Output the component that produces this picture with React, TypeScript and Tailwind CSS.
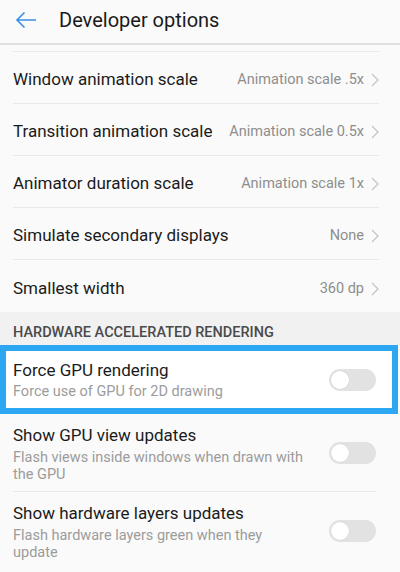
import React from "react";

const font = { fontFamily: "Roboto, 'Noto Sans', sans-serif" };

function Chevron() {
  return (
    <svg width="8" height="14" viewBox="0 0 8 14" className="ml-[7px] shrink-0">
      <path d="M1 1l6 6-6 6" fill="none" stroke="#c4c4c4" strokeWidth="1.3" />
    </svg>
  );
}

function Toggle() {
  return (
    <div className="w-[47px] h-[22px] rounded-full bg-[#e2e2e2] flex items-center px-[2px] shrink-0">
      <div className="w-[18px] h-[18px] rounded-full bg-white shadow-[0_0_1px_rgba(0,0,0,0.15)]" />
    </div>
  );
}

function ValueRow({ title, value, divider = true }: { title: string; value: string; divider?: boolean }) {
  return (
    <div className="pl-[13px] pr-[21px]">
      <div className={`h-[52px] pt-[5px] flex items-center ${divider ? "border-b border-[#e8e8e8]" : ""}`}>
        <span className="text-[17px] text-[#1b1b1b] flex-1">{title}</span>
        <span className="text-[14.5px] text-[#8e8e8e]">{value}</span>
        <Chevron />
      </div>
    </div>
  );
}

function ToggleRow({ title, sub, divider = true }: { title: string; sub: string; divider?: boolean }) {
  return (
    <div className="pl-[13px] pr-[24px]">
      <div className={`h-[78px] flex items-center ${divider ? "border-b border-[#e8e8e8]" : ""}`}>
        <div className="flex-1 self-start pt-[10px] pr-[12px]">
          <div className="text-[17px] leading-[22px] text-[#1b1b1b]">{title}</div>
          <div className="mt-[3px] text-[14.5px] leading-[17px] text-[#9c9c9c] max-w-[292px]">{sub}</div>
        </div>
        <Toggle />
      </div>
    </div>
  );
}

export default function App() {
  return (
    <div className="w-[400px] h-[572px] bg-[#fafafa] overflow-hidden" style={font}>
      {/* Header */}
      <div className="h-[45px] flex items-center border-b-2 border-[#e0e0e0] bg-[#fafafa]">
        <svg width="22" height="18" viewBox="0 0 22 18" className="ml-[15px] mt-[-4px]">
          <path d="M21 9H2M9.5 1.5L2 9l7.5 7.5" fill="none" stroke="#3a8fe3" strokeWidth="1.6" />
        </svg>
        <span className="ml-[22px] mt-[-4px] text-[20px] text-[#1a1a1a]">Developer options</span>
      </div>
      <div className="pl-[13px] pr-[21px]">
        <div className="h-[7px] border-b border-[#ececec]" />
      </div>

      <ValueRow title="Window animation scale" value="Animation scale .5x" />
      <ValueRow title="Transition animation scale" value="Animation scale 0.5x" />
      <ValueRow title="Animator duration scale" value="Animation scale 1x" />
      <ValueRow title="Simulate secondary displays" value="None" />
      <ValueRow title="Smallest width" value="360 dp" divider={false} />

      {/* Section header */}
      <div className="h-[33px] bg-[#f1f1f1] flex items-center pt-[9px] pl-[13px]">
        <span className="text-[14.5px] font-medium text-[#4a4a4a]">HARDWARE ACCELERATED RENDERING</span>
      </div>

      {/* Highlighted row */}
      <div className="w-[398px] h-[69px] border-[6px] border-[#2ea7f2] bg-white flex items-center pl-[7px] pr-[16px]">
        <div className="flex-1 mt-[1px]">
          <div className="text-[17px] leading-[22px] text-[#1b1b1b]">Force GPU rendering</div>
          <div className="mt-[2px] text-[14.5px] leading-[18px] text-[#9c9c9c]">Force use of GPU for 2D drawing</div>
        </div>
        <Toggle />
      </div>

      <ToggleRow title="Show GPU view updates" sub="Flash views inside windows when drawn with the GPU" />
      <ToggleRow title="Show hardware layers updates" sub="Flash hardware layers green when they update" divider={false} />
    </div>
  );
}
